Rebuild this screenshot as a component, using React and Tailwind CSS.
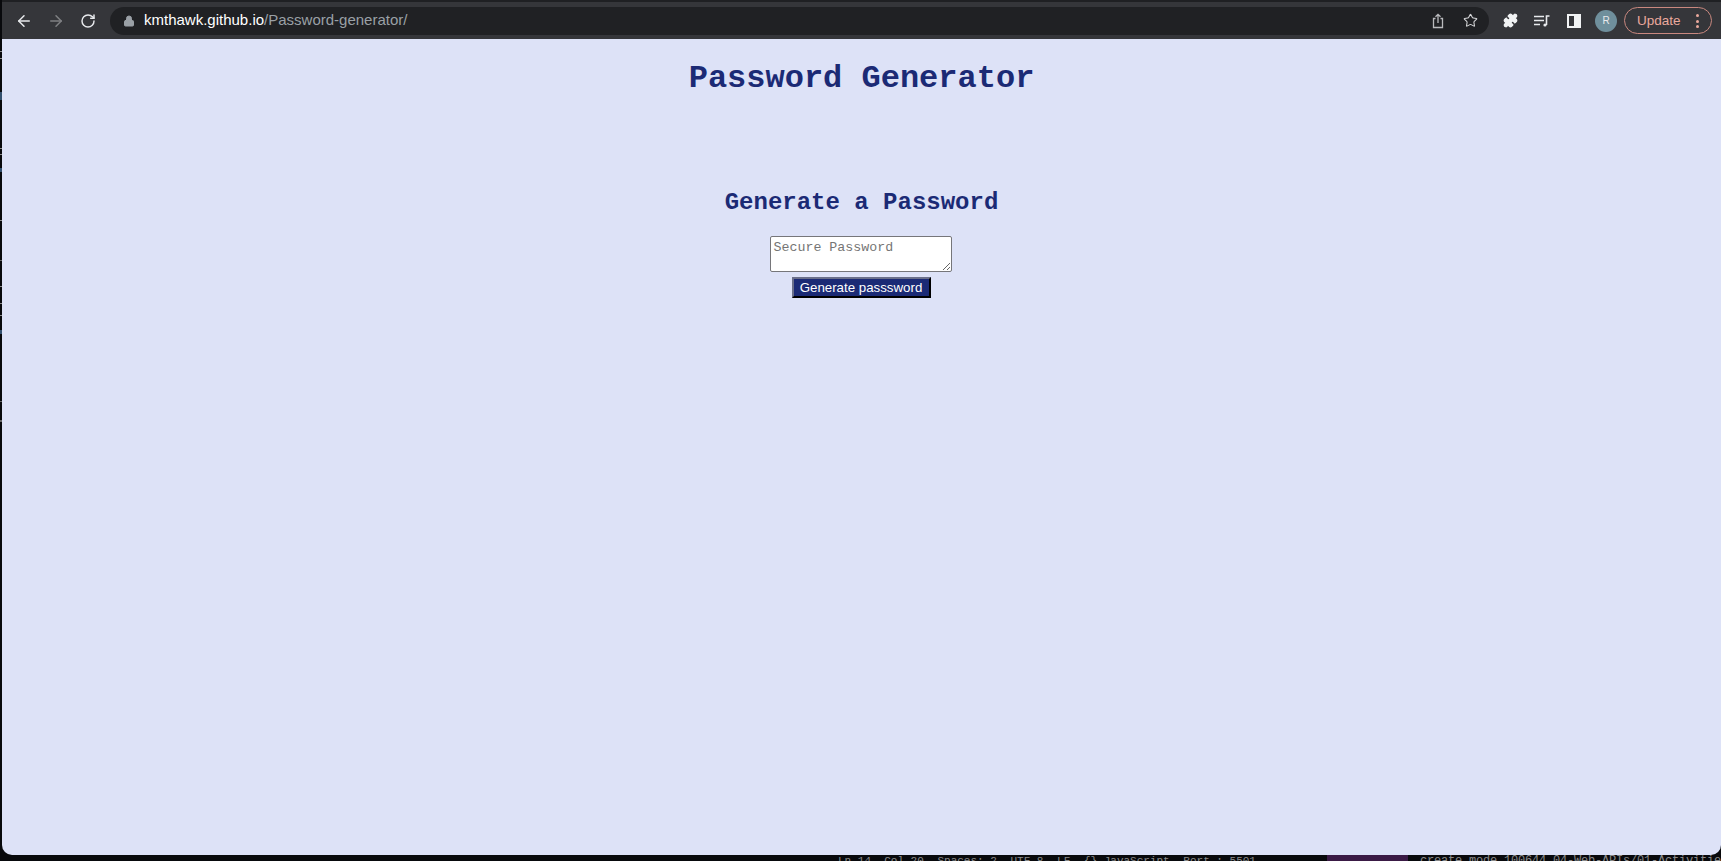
import React from "react";
import { ArrowLeft, ArrowRight, RotateCw, Lock, Star, Puzzle } from "lucide-react";

// bits of the window behind that show down the left edge
const EDGE_MARKS = [
  "mt-[51px] h-[1px] bg-[#8a8a8a]",
  "mt-[6px] h-[1px] bg-[#8a8a8a]",
  "mt-[33px] h-[8px] bg-[#33506e]",
  "mt-[48px] h-[1px] bg-[#8a8a8a]",
  "mt-[5px] h-[1px] bg-[#8a8a8a]",
  "mt-[13px] h-[4px] bg-[#33506e]",
  "mt-[48px] h-[1px] bg-[#8a8a8a]",
  "mt-[39px] h-[1px] bg-[#666666]",
  "mt-[25px] h-[1px] bg-[#8a8a8a]",
  "mt-[16px] h-[1px] bg-[#8a8a8a]",
  "mt-[11px] h-[1px] bg-[#8a8a8a]",
  "mt-[14px] h-[4px] bg-[#33506e]",
  "mt-[67px] h-[1px] bg-[#666666]",
  "mt-[18px] h-[2px] bg-[#666666]",
];

function ShareIcon() {
  return (
    <svg width="14" height="16" viewBox="0 0 14 16" fill="none" stroke="#b9babd" strokeWidth="1.3">
      <path d="M4.5 5.5H2.5v9h9v-9H9.5" />
      <path d="M7 10V1.5M4.5 3.8 7 1.3l2.5 2.5" />
    </svg>
  );
}

function MediaIcon() {
  return (
    <svg width="16" height="14" viewBox="0 0 16 14" fill="none" stroke="#e8eaed" strokeWidth="1.6">
      <path d="M0 2.5h10M0 6.5h10M0 10.5h6" />
      <path d="M12.5 11V2h3" />
      <circle cx="11" cy="11" r="1.6" fill="#e8eaed" stroke="none" />
    </svg>
  );
}

function SidebarIcon() {
  return (
    <div className="flex h-[14px] w-[14px] border-2 border-[#f1f3f4]">
      <div className="w-[5px]" />
      <div className="flex-1 bg-[#f1f3f4]" />
    </div>
  );
}

export default function App() {
  return (
    <div className="flex h-[861px] overflow-hidden bg-[#08090c]">
      <div className="flex w-[2px] shrink-0 flex-col">
        {EDGE_MARKS.map((m, i) => (
          <div key={i} className={m} />
        ))}
      </div>

      <div className="flex min-w-0 flex-1 flex-col">
        {/* browser chrome */}
        <div className="flex h-[39px] shrink-0 flex-col bg-[#35363a]">
          <div className="h-[2px] bg-[#1f2023]" />
          <div className="flex flex-1 items-center pl-[13px] font-['Liberation_Sans',sans-serif]">
            <ArrowLeft size={18} color="#e8eaed" strokeWidth={2} />
            <ArrowRight size={18} color="#7f8083" strokeWidth={2} className="ml-[14px]" />
            <RotateCw size={16} color="#e8eaed" strokeWidth={2.2} className="ml-[15px]" />

            <div className="ml-[14px] flex h-[28px] w-[1379px] items-center rounded-full bg-[#202124] pl-[13px] pr-[11px]">
              <Lock size={12} color="#9aa0a6" fill="#9aa0a6" />
              <div className="ml-[9px] text-[15px] text-white">
                kmthawk.github.io<span className="text-[#9aa0a6]">/Password-generator/</span>
              </div>
              <div className="ml-auto flex items-center gap-[18px]">
                <ShareIcon />
                <Star size={15} color="#d5d6d8" strokeWidth={1.7} />
              </div>
            </div>

            <Puzzle size={15} color="#f1f3f4" fill="#f1f3f4" className="ml-[14px]" />
            <div className="ml-[16px]">
              <MediaIcon />
            </div>
            <div className="ml-[17px]">
              <SidebarIcon />
            </div>
            <div className="ml-[14px] flex h-[22px] w-[22px] items-center justify-center rounded-full bg-[#6f8f9c] text-[10px] text-[#e8eaed]">
              R
            </div>
            <div className="ml-[7px] flex h-[27px] w-[88px] items-center rounded-full border border-[#c9887f] pl-[12px] pt-[1px] text-[13.5px] text-[#eba99d]">
              Update
              <div className="ml-[15px] flex flex-col gap-[2.5px]">
                <div className="h-[3px] w-[3px] rounded-full bg-[#eba99d]" />
                <div className="h-[3px] w-[3px] rounded-full bg-[#eba99d]" />
                <div className="h-[3px] w-[3px] rounded-full bg-[#eba99d]" />
              </div>
            </div>
          </div>
        </div>

        {/* page */}
        <div className="flex h-[816px] shrink-0 flex-col items-center rounded-b-[10px] bg-[#dde2f7] font-['Liberation_Mono',monospace] text-[#1b2a75]">
          <h1 className="mt-[21px] text-[32px] font-bold leading-[38px]">Password Generator</h1>
          <h2 className="mt-[89px] text-[24px] font-bold leading-[32px]">Generate a Password</h2>
          <textarea
            readOnly
            placeholder="Secure Password"
            className="mr-[2px] mt-[17px] h-[36px] w-[182px] rounded-[2px] border border-[#76767a] bg-white pl-[3px] pr-[2px] pt-[3px] text-[13.3px] leading-[15px] text-black placeholder:text-[#757575]"
          />
          <button className="mt-[5px] h-[21px] w-[139px] border-2 border-t-[#6a6f8a] border-l-[#6a6f8a] border-r-black border-b-black bg-[#1b2a75] pr-[1px] font-['Liberation_Sans',sans-serif] text-[13.3px] leading-none text-white">
            Generate passsword
          </button>
        </div>

        {/* what shows of the window behind */}
        <div className="flex h-[6px] overflow-hidden whitespace-pre font-['Liberation_Mono',monospace] text-[11px] leading-[12px] text-[#8a8a8a]">
          <div className="ml-[836px] flex w-[418px] shrink-0 justify-between">
            <span>Ln 14, Col 20</span>
            <span>Spaces: 2</span>
            <span>UTF-8</span>
            <span>LF</span>
            <span>{"{}"} JavaScript</span>
            <span>Port : 5501</span>
          </div>
          <div className="ml-[71px] h-[6px] w-[81px] shrink-0 bg-[#3a1a45]" />
          <div className="ml-[12px] shrink-0 text-[12px] tracking-[-0.2px] text-[#8a8a8a]">
            create mode 100644 04-Web-APIs/01-Activities
          </div>
        </div>
      </div>
    </div>
  );
}
